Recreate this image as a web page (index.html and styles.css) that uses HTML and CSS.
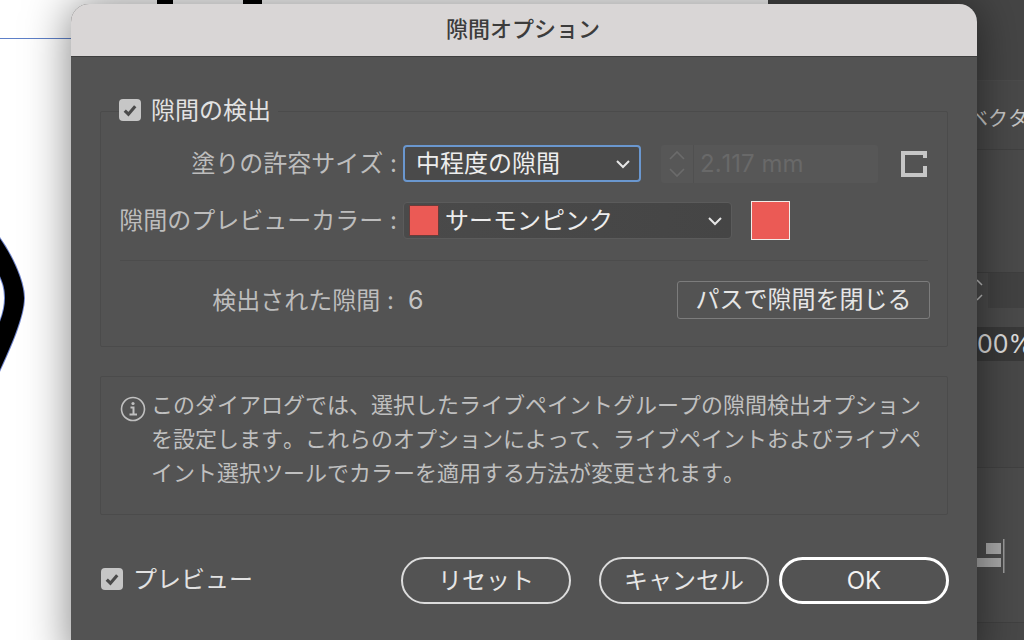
FILE: index.html
```html
<!DOCTYPE html>
<html lang="ja">
<head>
<meta charset="utf-8">
<title>隙間オプション</title>
<link rel="stylesheet" href="styles.css">
</head>
<body>
<div class="desktop">
  <div class="canvas">
    <svg class="art" width="768" height="640" viewBox="0 0 768 640">
      <path class="guide" d="M0 38.5H80"/>
      <path class="ink" d="M157 -4h16v9h-16zM243 -4h19v9h-19z"/>
      <path class="ink-edge" d="M-2 236 C10 252 24 280 24 298 C24 318 8 352 -2 374 V326 C3 316 5 306 5 298 C5 288 3 282 -2 272 Z"/>
      <path class="ink" d="M-2 236 C10 252 24 280 24 298 C24 318 8 352 -2 374 V326 C3 316 5 306 5 298 C5 288 3 282 -2 272 Z"/>
    </svg>
  </div>
  <aside class="panel">
    <div class="panel-sec sec-top"></div>
    <div class="panel-sec sec-title"><span class="panel-title">ベクタ</span></div>
    <div class="panel-sec sec-blank"></div>
    <div class="panel-sec sec-cells">
      <div class="cell cell-a"><svg width="8" height="30" viewBox="0 0 8 30"><path d="M1 5l5 5M6 20l-5 5"/></svg></div>
      <div class="cell cell-b"></div>
    </div>
    <div class="panel-sec sec-gap"></div>
    <div class="panel-sec sec-percent"><span class="percent">00%</span></div>
    <div class="panel-sec sec-mid"></div>
    <div class="panel-sec sec-align">
      <svg class="align-icon" width="28" height="36" viewBox="0 0 28 36">
        <rect class="bar" x="9" y="4" width="15" height="11"/>
        <rect class="bar" x="0" y="19" width="24" height="9"/>
        <rect class="bar-line" x="26" y="0" width="1.5" height="34"/>
      </svg>
    </div>
    <div class="panel-sec sec-end"></div>
  </aside>
</div>

<section class="dialog">
  <header class="titlebar">隙間オプション</header>
  <div class="dialog-body">
    <div class="group">
      <div class="legend">
        <span class="check"><svg width="22" height="22" viewBox="0 0 21 21"><path d="M5.5 11l3.5 3.5 6.5-7.5"/></svg></span>
        <span class="legend-text">隙間の検出</span>
      </div>
      <div class="row">
        <span class="label">塗りの許容サイズ :</span>
        <div class="select select-focus">
          <span class="select-text">中程度の隙間</span>
          <svg class="chev" width="16" height="10" viewBox="0 0 16 10"><path d="M2 2l6 6 6-6"/></svg>
        </div>
        <div class="stepper">
          <div class="stepper-arrows">
            <svg width="18" height="30" viewBox="0 0 18 30"><path d="M2 10l7-7 7 7M2 20l7 7 7-7"/></svg>
          </div>
          <span class="stepper-value">2.117 mm</span>
        </div>
        <svg class="link-icon" width="26" height="26" viewBox="0 0 26 26"><path d="M24 7V2H2v22h22v-9"/></svg>
      </div>
      <div class="row row-second">
        <span class="label">隙間のプレビューカラー :</span>
        <div class="select select-color">
          <span class="chip"></span>
          <span class="select-text">サーモンピンク</span>
          <svg class="chev" width="16" height="10" viewBox="0 0 16 10"><path d="M2 2l6 6 6-6"/></svg>
        </div>
        <span class="swatch"></span>
      </div>
      <div class="divider"></div>
      <div class="row row-result">
        <span class="label label-result">検出された隙間 :</span>
        <span class="count">6</span>
        <div class="close-btn">パスで隙間を閉じる</div>
      </div>
    </div>

    <div class="info">
      <svg class="info-icon" width="26" height="26" viewBox="0 0 26 26">
        <circle cx="13" cy="13" r="11.5"/>
        <path d="M10.5 11.5h3v7M9.5 18.5h7.5"/>
        <circle class="dot" cx="13" cy="7.5" r="1.6"/>
      </svg>
      <p class="info-text">このダイアログでは、選択したライブペイントグループの隙間検出オプションを設定します。これらのオプションによって、ライブペイントおよびライブペイント選択ツールでカラーを適用する方法が変更されます。</p>
    </div>

    <footer class="footer">
      <div class="preview">
        <span class="check check-preview"><svg width="22" height="22" viewBox="0 0 21 21"><path d="M5.5 11l3.5 3.5 6.5-7.5"/></svg></span>
        <span class="preview-text">プレビュー</span>
      </div>
      <div class="actions">
        <div class="btn">リセット</div>
        <div class="btn">キャンセル</div>
        <div class="btn btn-default">OK</div>
      </div>
    </footer>
  </div>
</section>
</body>
</html>
```
FILE: styles.css
```css
* { box-sizing: border-box; }
html, body { margin: 0; height: 100%; }
body {
  width: 1024px;
  height: 640px;
  overflow: hidden;
  position: relative;
  font-family: Inter, "Noto Sans CJK JP", sans-serif;
  font-size: 24px;
  font-kerning: none;
  background: #444;
}
.desktop { display: flex; width: 1024px; height: 640px; }

/* Artboard behind the dialog */
.canvas { flex: 0 0 768px; background: #fff; position: relative; overflow: hidden; }
.art { position: absolute; left: 0; top: 0; display: block; }
.guide { stroke: #5e80c8; stroke-width: 1; fill: none; }
.ink { fill: #000; }
.ink-edge { fill: none; stroke: #6f86cf; stroke-width: 2; }

/* Right side panel */
.panel { flex: 1; display: flex; flex-direction: column; background: #474747; overflow: hidden; }
.panel-sec { flex: none; padding-left: 200px; white-space: nowrap; }
.sec-top { height: 80px; background: #454545; }
.sec-title { height: 70px; background: #494949; border-top: 1px solid #4c4c4c; border-bottom: 1px solid #414141; color: #c6c6c6; font-size: 20px; line-height: 76px; }
.panel-title { display: block; }
.sec-blank { height: 122px; background: #4a4a4a; }
.sec-cells { height: 36px; display: flex; gap: 2px; padding-left: 205px; border-top: 1px solid #3f3f3f; background: #444; }
.cell { height: 35px; }
.cell-a { width: 17px; background: #4a4a4a; }
.cell-a svg { display: block; margin: 2px 0 0 3px; }
.cell-a path { fill: none; stroke: #bdbdbd; stroke-width: 1.5; }
.cell-b { width: 40px; background: #424242; }
.sec-gap { height: 19px; background: #4a4a4a; }
.sec-percent { height: 34px; background: #393939; color: #dcdcdc; font-size: 25px; line-height: 34px; padding-left: 209px; }
.sec-mid { height: 107px; background: #484848; border-bottom: 1px solid #414141; }
.sec-align { height: 154px; background: #4b4b4b; padding-left: 209px; padding-top: 71px; }
.align-icon { display: block; }
.bar { fill: #a9a9a9; }
.bar-line { fill: #9c9c9c; }
.sec-end { height: 18px; background: #484848; border-top: 1px solid #414141; }

/* Dialog window */
.dialog {
  position: absolute;
  left: 71px;
  top: 4px;
  width: 906px;
  height: 660px;
  background: #535353;
  border-radius: 18px 18px 0 0;
  box-shadow: 0 0 46px rgba(0, 0, 0, .5);
}
.titlebar {
  height: 53px;
  padding-right: 2px;
  background: #d9d6d6;
  border-bottom: 1px solid #3e3e3e;
  border-radius: 18px 18px 0 0;
  color: #3c3c3c;
  font-size: 22px;
  font-weight: 500;
  line-height: 51px;
  text-align: center;
}
.dialog-body { padding: 54px 29px 0 29px; }

/* Gap detection group */
.group {
  position: relative;
  height: 236px;
  border: 1px solid #4b4b4b;
  border-radius: 2px;
  padding: 33px 17px 0 19px;
}
.legend {
  position: absolute;
  left: 18px;
  top: -14px;
  display: flex;
  align-items: center;
  height: 24px;
  padding-right: 7px;
  background: #535353;
}
.legend-text { margin: 2px 0 0 10px; color: #e2e2e2; line-height: 24px; }
.check {
  flex: none;
  width: 22px;
  height: 22px;
  border-radius: 4px;
  background: #c6c6c6;
}
.check svg { display: block; }
.check path { fill: none; stroke: #4a4a4a; stroke-width: 3; }
.row { display: flex; align-items: center; height: 37px; }
.row-second { margin-top: 20px; }
.label {
  flex: 0 0 277px;
  min-width: 0;
  text-align: right;
  color: #bdbdbd;
  line-height: 37px;
  white-space: nowrap;
}
.row-second .label { flex-basis: 278px; margin-left: -1px; }
.select {
  flex: none;
  height: 37px;
  margin-left: 6px;
  display: flex;
  align-items: center;
  border-radius: 4px;
  color: #ededed;
  line-height: 33px;
}
.select-focus { width: 238px; padding: 0 8px 0 11px; background: #4a4a4a; border: 2px solid #6a97cf; }
.select-color { width: 329px; padding: 0 8px 0 5px; background: linear-gradient(90deg, #4a4a4a, #454545); border: 1px solid #5b5b5b; }
.select .chev { margin-left: auto; flex: none; }
.chev path { fill: none; stroke: #e6e6e6; stroke-width: 2; }
.chip { flex: none; width: 30px; height: 31px; margin-right: 6px; background: #eb5a55; border: 1px solid #6a3c3a; }
.stepper {
  flex: none;
  width: 217px;
  height: 38px;
  margin-left: 20px;
  display: flex;
  align-items: center;
  background: #575757;
  border-radius: 3px;
}
.stepper-arrows { flex: 0 0 33px; height: 38px; display: flex; align-items: center; justify-content: center; border-right: 1px solid #505050; }
.stepper-arrows svg { display: block; }
.stepper-arrows path { fill: none; stroke: #6b6b6b; stroke-width: 1.6; }
.stepper-value { margin-left: 6px; color: #696969; }
.link-icon { flex: none; margin-left: 23px; }
.link-icon path { fill: none; stroke: #c6c6c6; stroke-width: 4; }
.swatch { flex: none; width: 39px; height: 39px; margin-left: 19px; background: #eb5a55; border: 1px solid #f2ece8; }
.divider { height: 1px; margin: 21px 2px 20px 0; background: #4c4c4c; }
.row-result { height: 38px; }
.label-result { padding-right: 3px; }
.count { margin-left: 11px; color: #c4c4c4; font-size: 25px; }
.close-btn {
  margin-left: auto;
  flex: 0 0 253px;
  height: 38px;
  border: 1px solid #7c7c7c;
  border-radius: 3px;
  color: #e6e6e6;
  line-height: 36px;
  text-align: center;
}

/* Info box */
.info {
  display: flex;
  height: 139px;
  margin-top: 29px;
  padding: 11px 0 0 19px;
  border: 1px solid #4b4b4b;
  border-radius: 2px;
}
.info-icon { flex: none; margin-top: 8px; }
.info-icon circle { fill: none; stroke: #c0c0c0; stroke-width: 1.6; }
.info-icon path { fill: none; stroke: #c0c0c0; stroke-width: 2; }
.info-icon .dot { fill: #c0c0c0; stroke: none; }
.info-text { margin: 0 0 0 5px; width: 772px; font-size: 22px; line-height: 34px; color: #c0c0c0; }

/* Footer */
.footer { display: flex; align-items: center; justify-content: space-between; margin: 42px -1px 0 0; height: 47px; }
.preview { display: flex; align-items: center; padding-left: 1px; }
.check-preview { margin-bottom: 4px; }
.preview-text { margin: 0 0 2px 10px; color: #e2e2e2; line-height: 30px; }
.actions { display: flex; }
.btn {
  width: 170px;
  height: 47px;
  border: 2px solid #dcdcdc;
  border-radius: 24px;
  color: #e6e6e6;
  line-height: 43px;
  text-align: center;
  margin-left: 28px;
}
.btn-default { margin-left: 10px; border: 3px solid #fff; line-height: 41px; color: #f2f2f2; }
```
